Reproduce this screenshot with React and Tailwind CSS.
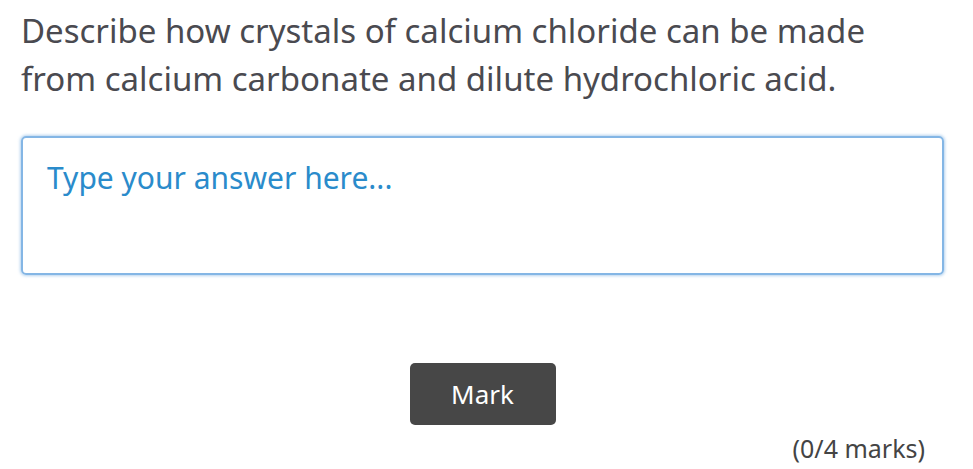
export default function App() {
  return (
    <div
      className="min-h-screen bg-white pl-[21px] pr-[29px] pt-[7px]"
      style={{ fontFamily: '"Noto Sans", "Open Sans", sans-serif' }}
    >
      <p className="text-[33px] leading-[48px] text-[#4a4a50]">
        Describe how crystals of calcium chloride can be made
        <br />
        from calcium carbonate and dilute hydrochloric acid.
      </p>

      <div className="mt-[33px] h-[139px] rounded-[5px] border-2 border-[#84b6e5] shadow-[0_0_3px_1px_rgba(132,182,229,0.6)]">
        <textarea
          className="block h-full w-full resize-none bg-transparent px-[24px] pt-[20px] text-[30px] leading-[40px] text-[#333] outline-none placeholder:text-[#2a8bcb]"
          placeholder="Type your answer here..."
        />
      </div>

      <div className="mt-[88px] flex justify-center">
        <button className="h-[62px] w-[146px] rounded-[5px] bg-[#474747] text-[26px] text-white">
          Mark
        </button>
      </div>

      <div className="mt-[8px] pr-[19px] text-right text-[25px] leading-[30px] text-[#444]">
        (0/4 marks)
      </div>
    </div>
  );
}
